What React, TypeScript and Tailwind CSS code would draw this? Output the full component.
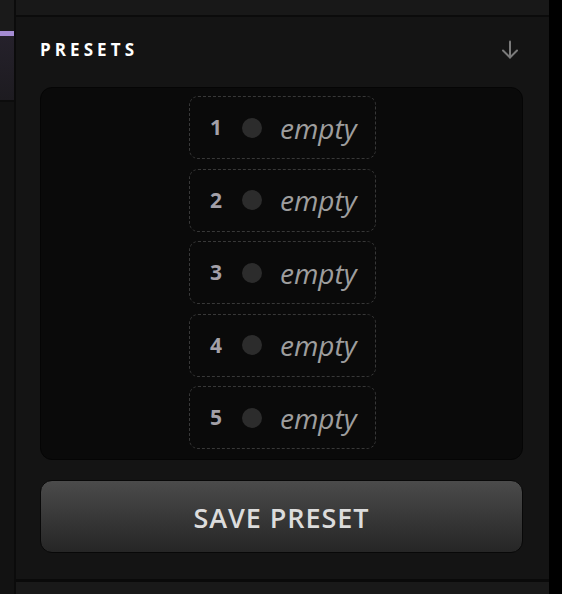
import React from 'react'

const slots = [1, 2, 3, 4, 5]

function ArrowDownIcon() {
  return (
    <svg width="18" height="19" viewBox="0 0 18 19" fill="none" stroke="#7a7a7a" strokeWidth="2" strokeLinecap="round" strokeLinejoin="round">
      <path d="M9 1.5v16" />
      <path d="M2 10.5l7 7 7-7" />
    </svg>
  )
}

function PresetSlot({ n }: { n: number }) {
  return (
    <div className="flex h-[63px] w-[187px] items-center rounded-[9px] border border-dashed border-[#383838] pl-[20px]">
      <span className="w-[13px] text-[21px] font-bold leading-none text-[#a3a0a8]">{n}</span>
      <span className="ml-[19px] h-[20px] w-[20px] rounded-full bg-[#2c2c2c]" />
      <span className="ml-[18px] text-[28px] italic leading-none text-[#9e9e9e]">empty</span>
    </div>
  )
}

export default function App() {
  return (
    <div className="flex h-[594px] w-[562px] overflow-hidden bg-black font-['Open_Sans',sans-serif]">
      {/* left neighbour column */}
      <div className="flex w-[16px] flex-col border-r-2 border-[#0b0b0b] bg-[#121212]">
        <div className="h-[31px] bg-[#1a1a1a]" />
        <div className="h-[5px] bg-[#a48bd2]" />
        <div className="h-[66px] border-b-2 border-[#0c0c0c] bg-gradient-to-b from-[#25212b] to-[#1d1b20]" />
      </div>

      {/* presets panel */}
      <div className="flex w-[533px] flex-col bg-[#141414]">
        <div className="h-[17px] border-b-2 border-[#0b0b0b] bg-[#181818]" />
        <div className="flex flex-1 flex-col pl-[24px] pr-[26px]">
          <div className="flex h-[70px] items-center justify-between pb-[6px]">
            <h2 className="text-[17px] font-bold leading-none tracking-[0.24em] text-white">PRESETS</h2>
            <span className="mr-[4px]">
              <ArrowDownIcon />
            </span>
          </div>
          <div className="flex h-[373px] flex-col items-center gap-[9.5px] rounded-[12px] border border-[#050505] bg-[#0a0a0a] pl-[2px] pt-[8px]">
            {slots.map(n => (
              <PresetSlot key={n} n={n} />
            ))}
          </div>
          <button className="mt-[20px] flex h-[73px] items-center justify-center rounded-[12px] border border-[#080808] bg-gradient-to-b from-[#4b4b4b] to-[#262626] pt-[3px] text-[27px] font-semibold tracking-[0.035em] text-[#dcdcdc]">
            SAVE PRESET
          </button>
        </div>
        <div className="h-[15px] border-t-[3px] border-[#0a0a0a] bg-[#191919]" />
      </div>
    </div>
  )
}
